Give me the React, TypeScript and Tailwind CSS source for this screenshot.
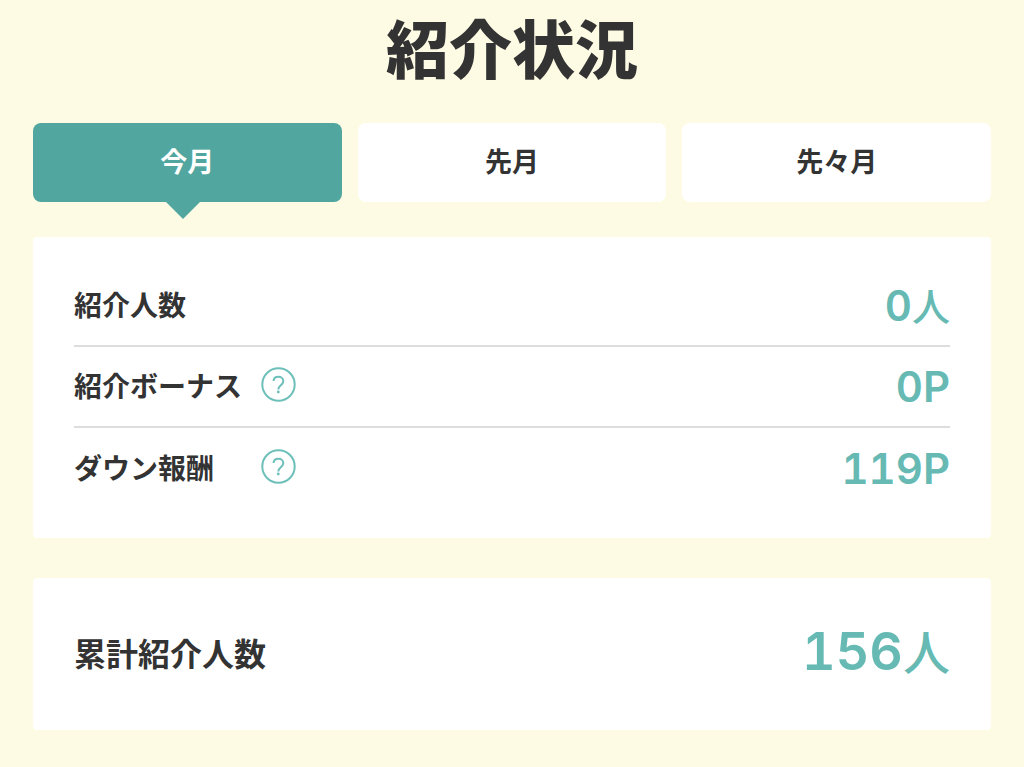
import { useState } from 'react';

const tabs = ['今月', '先月', '先々月'];

const rows = [
  { label: '紹介人数', value: '0', unit: '人', help: false },
  { label: '紹介ボーナス', value: '0P', unit: '', help: true },
  { label: 'ダウン報酬', value: '119P', unit: '', help: true },
];

function HelpIcon() {
  return (
    <svg viewBox="0 0 36 36" className="h-9 w-9" fill="none" stroke="#6dbfb9" strokeWidth="2" aria-hidden="true">
      <circle cx="18.500" cy="17.500" r="16.200" />
      <path d="M13.500 14c.2-2.800 2.200-4.300 4.900-4.300s4.900 1.700 4.900 4.400c0 2-1.100 3-2.500 4.100-1.500 1.200-2.500 2.200-2.500 4.300" />
      <circle cx="18.300" cy="25" r="1.400" fill="#6dbfb9" stroke="none" />
    </svg>
  );
}

export default function App() {
  const [active, setActive] = useState(0);

  return (
    <main className="min-h-screen bg-[#fefbe5] px-[33px] pt-2 pb-9 font-['Noto_Sans_CJK_JP',sans-serif] text-[#333333]">
      <h1 className="text-center text-[63px] leading-[75px] font-black">紹介状況</h1>

      <div className="mt-10 grid grid-cols-3 gap-4">
        {tabs.map((tab, index) => (
          <button
            key={tab}
            type="button"
            onClick={() => setActive(index)}
            className={
              index === active
                ? 'relative h-[79px] rounded-lg bg-[#51a79f] pb-0.5 text-[27px] font-bold text-white'
                : 'relative h-[79px] rounded-lg bg-white pb-0.5 text-[27px] font-bold'
            }
          >
            {tab}
            {index === active && (
              <svg viewBox="0 0 34 17" className="absolute top-full left-[43%] h-[17px] w-[34px]" aria-hidden="true">
                <path d="M0 0h34L17 17z" fill="#51a79f" />
              </svg>
            )}
          </button>
        ))}
      </div>

      <section className="mt-[35px] rounded-sm bg-white px-[41px] py-[29px]">
        {rows.map((row) => (
          <div key={row.label} className="flex h-[81px] items-center border-b-2 border-[#dddddd] pb-1 last:border-b-0">
            <span className="w-[186px] text-[28px] font-bold">{row.label}</span>
            {row.help && (
              <button type="button" aria-label={row.label}>
                <HelpIcon />
              </button>
            )}
            <span className="ml-auto pt-1 text-[42px] leading-none font-semibold text-[#66bab3] tabular-nums font-['Inter','Noto_Sans_CJK_JP',sans-serif]">
              {row.value}
              {row.unit && <span className="text-[38px] font-medium">{row.unit}</span>}
            </span>
          </div>
        ))}
      </section>

      <section className="mt-10 flex h-[152px] items-center justify-between rounded-sm bg-white px-[41px] pb-1">
        <span className="text-[32px] font-bold">累計紹介人数</span>
        <span className="text-[52px] leading-none font-semibold text-[#66bab3] tabular-nums font-['Inter','Noto_Sans_CJK_JP',sans-serif]">
          156<span className="text-[47px] font-medium">人</span>
        </span>
      </section>
    </main>
  );
}
